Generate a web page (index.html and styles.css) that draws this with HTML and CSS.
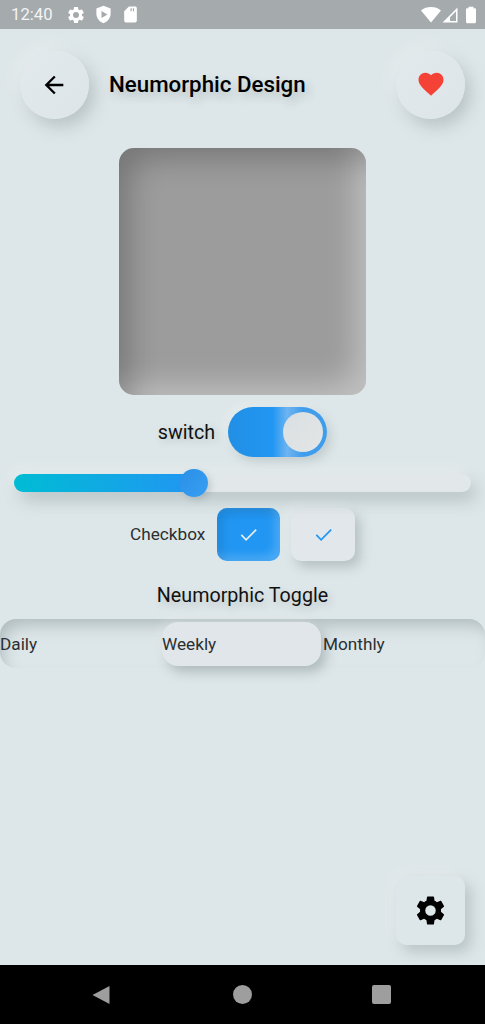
FILE: index.html
```html
<!DOCTYPE html>
<html lang="en">
<head>
  <meta charset="UTF-8">
  <title>Neumorphic Design</title>
  <link rel="stylesheet" href="styles.css">
</head>
<body>
  <div class="phone">

    <!-- status bar -->
    <div class="status-bar">
      <span class="clock">12:40</span>
      <svg class="st-icon st-gear" viewBox="0 0 24 24"><path d="M19.14 12.94c.04-.3.06-.61.06-.94s-.02-.64-.07-.94l2.03-1.58a.49.49 0 0 0 .12-.61l-1.92-3.32a.49.49 0 0 0-.59-.22l-2.39.96a7 7 0 0 0-1.62-.94l-.36-2.54a.48.48 0 0 0-.48-.41h-3.84a.47.47 0 0 0-.47.41l-.36 2.54c-.59.24-1.13.57-1.62.94l-2.39-.96a.49.49 0 0 0-.59.22L2.74 8.87a.48.48 0 0 0 .12.61l2.03 1.58c-.05.3-.09.63-.09.94s.02.64.07.94l-2.03 1.58a.49.49 0 0 0-.12.61l1.92 3.32c.12.22.37.29.59.22l2.39-.96c.5.38 1.03.7 1.62.94l.36 2.54c.05.24.24.41.48.41h3.84c.24 0 .44-.17.47-.41l.36-2.54c.59-.24 1.13-.56 1.62-.94l2.39.96c.22.08.47 0 .59-.22l1.92-3.32a.48.48 0 0 0-.12-.61zM12 15.6A3.6 3.6 0 1 1 12 8.4a3.6 3.6 0 0 1 0 7.2z"/></svg>
      <svg class="st-icon st-shield" viewBox="0 0 24 24"><path fill-rule="evenodd" d="M12 1 3 4.5v6.6c0 5.4 3.8 10.4 9 11.9 5.200-1.500 9-6.500 9-11.900V4.500zM9.500 7.500v9l7.500-4.500z"/></svg>
      <svg class="st-icon st-card" viewBox="0 0 24 24"><path fill-rule="evenodd" d="M18 2h-8L4 8v12c0 1.100.9 2 2 2h12c1.100 0 2-.9 2-2V4c0-1.100-.9-2-2-2zM12 4h1.500v4H12zM15 4h1.500v4H15z"/></svg>
      <span class="status-gap"></span>
      <svg class="st-icon st-wifi" viewBox="0 0 24 24"><path d="M12 21 0 6.500C3.200 3.900 7.400 2.500 12 2.500s8.800 1.400 12 4z"/></svg>
      <svg class="st-icon st-signal" viewBox="0 0 24 24"><path fill-rule="evenodd" d="M22 2v20H2zM20 7 12 15v5h8z"/></svg>
      <svg class="st-icon st-battery" viewBox="0 0 24 24"><path d="M16.500 4H15V2H9v2H7.500C6.700 4 6 4.700 6 5.500v15c0 .8.700 1.500 1.500 1.500h9c.8 0 1.500-.7 1.500-1.500v-15c0-.8-.7-1.500-1.500-1.500z"/></svg>
    </div>

    <div class="content">
      <!-- header -->
      <div class="header">
        <div class="round-btn">
          <svg class="back-icon" viewBox="0 0 24 24"><path d="M20 11H7.830l5.590-5.590L12 4l-8 8 8 8 1.410-1.410L7.830 13H20z"/></svg>
        </div>
        <h1 class="title">Neumorphic Design</h1>
        <div class="round-btn">
          <svg class="heart-icon" viewBox="0 0 24 24"><path d="m12 21.350-1.450-1.320C5.400 15.360 2 12.280 2 8.500 2 5.420 4.420 3 7.500 3c1.740 0 3.410.81 4.500 2.090C13.090 3.810 14.760 3 16.500 3 19.580 3 22 5.420 22 8.500c0 3.780-3.400 6.860-8.550 11.540z"/></svg>
        </div>
      </div>

      <div class="picture"></div>

      <div class="switch-row">
        <span class="switch-label">switch</span>
        <div class="switch"><div class="switch-thumb"></div></div>
      </div>

      <div class="slider">
        <div class="slider-fill"></div>
        <div class="slider-thumb"></div>
      </div>

      <div class="check-row">
        <span class="check-label">Checkbox</span>
        <div class="check check-on">
          <svg viewBox="0 0 24 24"><path d="M4.500 12.500 9.500 17.500 20 7"/></svg>
        </div>
        <div class="check check-off">
          <svg viewBox="0 0 24 24"><path d="M4.500 12.500 9.500 17.500 20 7"/></svg>
        </div>
      </div>

      <div class="toggle-title">Neumorphic Toggle</div>

      <div class="toggle">
        <div class="toggle-item">Daily</div>
        <div class="toggle-item toggle-active">Weekly</div>
        <div class="toggle-item">Monthly</div>
      </div>

      <div class="spacer"></div>

      <div class="fab-row">
        <div class="fab">
          <svg viewBox="0 0 24 24"><path d="M19.140 12.940c.04-.3.06-.61.06-.94s-.02-.64-.07-.94l2.030-1.580a.49.49 0 0 0 .12-.61l-1.920-3.320a.49.49 0 0 0-.59-.22l-2.390.96a7 7 0 0 0-1.620-.94l-.36-2.540a.48.48 0 0 0-.48-.41h-3.840a.47.47 0 0 0-.47.41l-.36 2.540c-.59.24-1.130.57-1.620.94l-2.390-.96a.49.49 0 0 0-.59.22L2.740 8.870a.48.48 0 0 0 .12.61l2.030 1.580c-.05.3-.09.63-.09.94s.02.64.07.94l-2.030 1.580a.49.49 0 0 0-.12.61l1.920 3.320c.12.22.37.29.59.22l2.390-.96c.5.38 1.030.7 1.620.94l.36 2.540c.05.24.24.41.48.41h3.840c.24 0 .44-.17.47-.41l.36-2.540c.59-.24 1.130-.56 1.620-.94l2.390.96c.22.08.47 0 .59-.22l1.920-3.320a.48.48 0 0 0-.12-.61zM12 15.600A3.600 3.600 0 1 1 12 8.400a3.600 3.600 0 0 1 0 7.200z"/></svg>
        </div>
      </div>
    </div>

    <!-- nav bar -->
    <div class="nav-bar">
      <svg class="nav-back" viewBox="0 0 18 20"><path d="M17.500 1v18L.5 10z"/></svg>
      <div class="nav-home"></div>
      <div class="nav-recent"></div>
    </div>
  </div>
</body>
</html>
```

FILE: styles.css
```css
/* page */
* {
  box-sizing: border-box;
}

body {
  margin: 0;
  font-family: Roboto, sans-serif;
  background: #dde6e8;
}

.phone {
  width: 485px;
  height: 1024px;
  display: flex;
  flex-direction: column;
  overflow: hidden;
}

/* status bar */
.status-bar {
  height: 29px;
  background: #a5aaad;
  color: #fff;
  display: flex;
  align-items: center;
  padding: 0 4px 0 11px;
  flex-shrink: 0;
}

.clock {
  font-size: 16.700px;
  width: 55px;
  color: #f2f4f4;
}

.st-icon {
  fill: #fff;
  display: block;
}

.st-gear {
  width: 20px;
  height: 20px;
}

.st-shield {
  width: 19px;
  height: 19px;
  margin-left: 8px;
}

.st-card {
  width: 19px;
  height: 19px;
  margin-left: 8px;
}

.status-gap {
  flex: 1;
}

.st-wifi {
  width: 20px;
  height: 20px;
}

.st-signal {
  width: 18px;
  height: 18px;
}

.st-battery {
  width: 20px;
  height: 20px;
  margin-left: 2px;
}

/* main area */
.content {
  flex: 1;
  display: flex;
  flex-direction: column;
  background: #dde6e8;
}

.header {
  display: flex;
  align-items: center;
  padding: 21px 20px 0;
}

.round-btn {
  width: 69px;
  height: 69px;
  border-radius: 50%;
  background: linear-gradient(135deg, #e3e9ec, #dde5e8);
  box-shadow: 6px 8px 16px rgba(120, 135, 140, 0.35), -6px -6px 16px rgba(255, 255, 255, 0.3);
  display: flex;
  align-items: center;
  justify-content: center;
  flex-shrink: 0;
}

.back-icon {
  width: 28px;
  height: 28px;
  fill: #000;
  margin-right: 1px;
}

.heart-icon {
  width: 30px;
  height: 30px;
  margin-bottom: 2px;
  fill: #f44336;
}

.title {
  flex: 1;
  margin: 0 0 2px 20px;
  font-size: 22.300px;
  font-weight: 500;
  color: #000;
  text-shadow: 4px 5px 8px rgba(100, 115, 120, 0.3);
}

.picture {
  width: 247px;
  height: 247px;
  margin: 29px auto 0;
  border-radius: 15px;
  background: #9c9c9c;
  box-shadow:
    inset 20px 20px 30px -10px rgba(0, 0, 0, 0.24),
    inset -20px -20px 30px -10px rgba(255, 255, 255, 0.36);
}

/* switch */
.switch-row {
  display: flex;
  align-items: center;
  justify-content: center;
  gap: 13px;
  margin-top: 12px;
}

.switch-label {
  font-size: 19.700px;
  color: #111;
  text-shadow: 3px 3px 7px rgba(100, 115, 120, 0.25);
}

.switch {
  width: 99px;
  height: 50px;
  border-radius: 25px;
  background: linear-gradient(90deg, #228fe4 0, #2196f3 45%, #6db4f0 60%, #3f9deb 76%, #3f9deb 100%);
  box-shadow: 4px 5px 10px rgba(120, 135, 140, 0.25), -4px -4px 10px rgba(255, 255, 255, 0.25);
  padding: 5px 4px 0 0;
  display: flex;
  justify-content: flex-end;
}

.switch-thumb {
  width: 40px;
  height: 40px;
  border-radius: 50%;
  background: linear-gradient(135deg, #d9dfe1, #e3e6e7);
}

/* slider */
.slider {
  position: relative;
  height: 18px;
  margin: 17px 14px 0;
  border-radius: 9px;
  background: #e2e8ea;
  box-shadow: 6px 9px 16px rgba(120, 135, 140, 0.35), -5px -6px 12px rgba(255, 255, 255, 0.3);
}

.slider-fill {
  width: 182px;
  height: 18px;
  border-radius: 9px;
  background: linear-gradient(90deg, #00bcd4, #2196f3);
}

.slider-thumb {
  position: absolute;
  left: 166px;
  top: -5px;
  width: 28px;
  height: 28px;
  border-radius: 50%;
  background: linear-gradient(135deg, #2a8fe6, #389ff3);
  box-shadow: 3px 3px 6px rgba(120, 135, 140, 0.3);
}

/* checkbox */
.check-row {
  display: flex;
  align-items: center;
  margin-top: 16px;
  padding-left: 130px;
}

.check-label {
  font-size: 17.200px;
  color: #2b2f31;
  width: 87px;
  margin-bottom: 2px;
}

.check {
  height: 53px;
  border-radius: 10px;
  display: flex;
  align-items: center;
  justify-content: center;
}

.check svg {
  width: 23px;
  height: 23px;
  fill: none;
  stroke-width: 1.800;
}

.check-on {
  width: 63px;
  background: #2196f3;
  box-shadow:
    inset 5px 5px 10px rgba(0, 0, 0, 0.1),
    inset -5px -5px 10px rgba(255, 255, 255, 0.2);
}

.check-on svg {
  stroke: #e6eef2;
}

.check-off {
  width: 64px;
  margin-left: 11px;
  background: #e1e7ea;
  box-shadow: 5px 6px 12px rgba(120, 135, 140, 0.4), -4px -4px 10px rgba(255, 255, 255, 0.25);
}

.check-off svg {
  stroke: #2196f3;
}

/* toggle */
.toggle-title {
  margin-top: 23px;
  font-size: 19.700px;
  line-height: 23px;
  color: #111;
  text-align: center;
  text-shadow: 3px 4px 7px rgba(100, 115, 120, 0.25);
}

.toggle {
  display: grid;
  grid-template-columns: 162px 161px 162px;
  height: 49px;
  margin-top: 12px;
  padding: 3px 0 2px;
  border-radius: 16px;
  background: #dde6e8;
  box-shadow: inset 6px 10px 16px -4px rgba(120, 135, 140, 0.45);
}

.toggle-item {
  display: flex;
  align-items: center;
  font-size: 17.200px;
  color: #2b2f31;
}

.toggle-active {
  margin-right: 2px;
  border-radius: 16px;
  background: #e0e6e9;
  box-shadow: 5px 6px 12px rgba(120, 135, 140, 0.45), -3px -3px 8px rgba(255, 255, 255, 0.25);
}

.spacer {
  flex: 1;
}

/* settings button */
.fab-row {
  display: flex;
  justify-content: flex-end;
  padding: 0 20px 20px;
}

.fab {
  width: 69px;
  height: 69px;
  border-radius: 10px;
  background: #dde6e8;
  box-shadow: 6px 7px 14px rgba(120, 135, 140, 0.35), -6px -6px 14px rgba(255, 255, 255, 0.2);
  display: flex;
  align-items: center;
  justify-content: center;
}

.fab svg {
  width: 35px;
  height: 35px;
  fill: #000;
}

/* nav bar */
.nav-bar {
  height: 59px;
  background: #000;
  display: flex;
  align-items: center;
  padding-left: 92px;
  flex-shrink: 0;
}

.nav-back {
  width: 18px;
  height: 20px;
  fill: #9e9e9e;
}

.nav-home {
  width: 19px;
  height: 19px;
  margin-left: 123px;
  border-radius: 50%;
  background: #9e9e9e;
}

.nav-recent {
  width: 19px;
  height: 19px;
  margin-left: 120px;
  border-radius: 2px;
  background: #9e9e9e;
}
```
